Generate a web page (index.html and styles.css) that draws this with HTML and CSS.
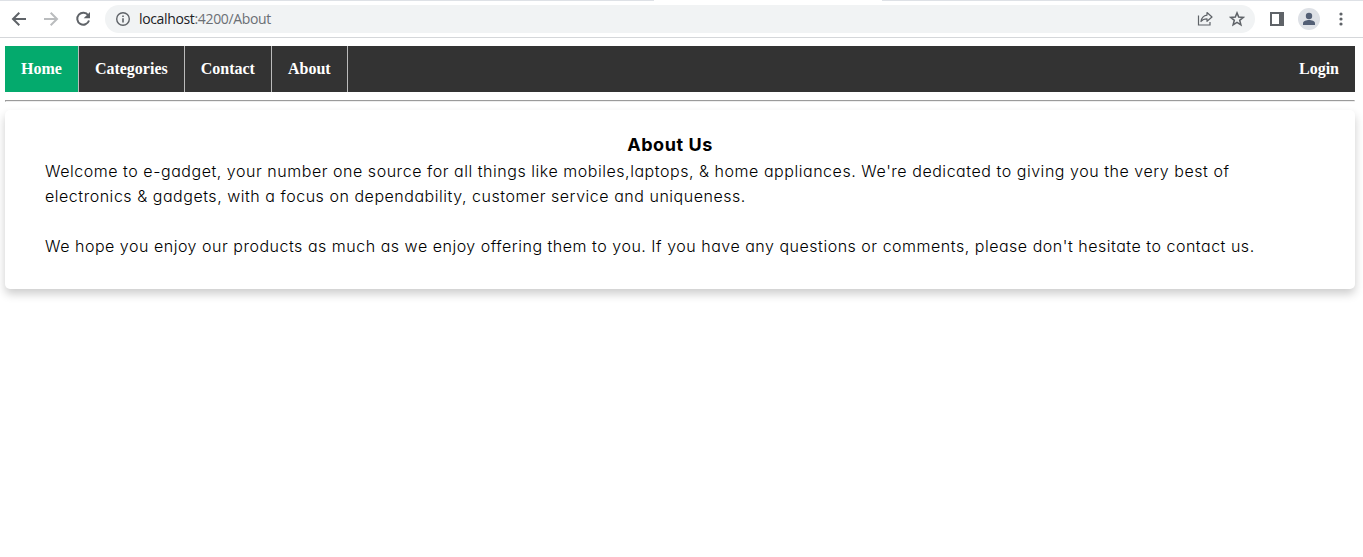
FILE: index.html
```html
<!DOCTYPE html>
<html lang="en">
<head>
<meta charset="utf-8">
<title>About</title>
<link rel="stylesheet" href="styles.css">
</head>
<body>
<header class="toolbar">
  <div class="tab-edge"><span class="edge edge-left"></span><span class="edge edge-right"></span></div>
  <div class="controls">
    <svg class="icon back" viewBox="0 0 16 16"><path d="M15 8H2M8.300 1.700 2 8l6.300 6.300" fill="none" stroke="#5f6368" stroke-width="2"/></svg>
    <svg class="icon forward" viewBox="0 0 16 16"><path d="M1 8h13M7.700 1.700 14 8l-6.300 6.300" fill="none" stroke="#babcbe" stroke-width="2"/></svg>
    <svg class="icon reload" viewBox="0 0 16 16"><path d="M13.200 4.300A6 6 0 1 0 14 9.500" fill="none" stroke="#5f6368" stroke-width="2"/><path d="M15 1v6.300H8.700z" fill="#5f6368"/></svg>
    <div class="address">
      <svg class="info" viewBox="0 0 14 14"><circle cx="7" cy="7" r="6.300" fill="none" stroke="#5f6368" stroke-width="1.400"/><path d="M6.200 6.200h1.600v4.300H6.200zM6.200 3.500h1.600v1.600H6.200z" fill="#5f6368"/></svg>
      <span class="url"><span class="host">localhost</span>:4200/About</span>
      <svg class="share" viewBox="0 0 16 16"><path d="M1.500 4.500v9.500h11.500v-3" fill="none" stroke="#5f6368" stroke-width="1.200"/><path d="M10 1.500 15 6l-5 4.300V7.800C7.300 7.800 5.300 8.600 4 10.500 4.500 7 6.500 4.600 10 4.100z" fill="none" stroke="#5f6368" stroke-width="1.200" stroke-linejoin="round"/></svg>
      <svg class="star" viewBox="0 0 16 16"><path d="m8 1.900 1.700 4.200 4.500.3-3.500 2.900 1.200 4.500L8 11.400l-3.900 2.400 1.200-4.500-3.500-2.900 4.500-.3z" fill="none" stroke="#5f6368" stroke-width="1.500"/></svg>
    </div>
    <svg class="panel" viewBox="0 0 14 14"><path d="M0 0h14v14H0zM2 2v10h7V2z" fill="#5f6368" fill-rule="evenodd"/></svg>
    <svg class="profile" viewBox="0 0 22 22"><circle cx="11" cy="11" r="11" fill="#dee1e6"/><circle cx="11" cy="8" r="3.200" fill="#535f75"/><path d="M5 17v-1.600c0-2.200 3.500-3.300 6-3.300s6 1.100 6 3.300V17z" fill="#535f75"/></svg>
    <svg class="more" viewBox="0 0 4 14"><g fill="#5f6368"><circle cx="2" cy="2" r="1.600"/><circle cx="2" cy="7" r="1.600"/><circle cx="2" cy="12" r="1.600"/></g></svg>
  </div>
</header>
<main class="page">
  <nav class="nav">
    <a class="link active">Home</a>
    <a class="link">Categories</a>
    <a class="link">Contact</a>
    <a class="link">About</a>
    <a class="link login">Login</a>
  </nav>
  <hr class="rule">
  <section class="card">
    <h1 class="title">About Us</h1>
    <p class="text"><span class="line first">Welcome to e-gadget, your number one source for all things like mobiles,laptops, &amp; home appliances. We're dedicated to giving you the very best of</span>
    <span class="line second">electronics &amp; gadgets, with a focus on dependability, customer service and uniqueness.</span></p>
    <p class="text"><span class="line third">We hope you enjoy our products as much as we enjoy offering them to you. If you have any questions or comments, please don't hesitate to contact us.</span></p>
  </section>
</main>
</body>
</html>
```
FILE: styles.css
```css
* { box-sizing: border-box; }
body { margin: 0; min-height: 100vh; background: #fff; color: #000; }
svg { display: block; flex: none; }
.toolbar { height: 38px; border-bottom: 1px solid #d5d7da; }
.tab-edge { display: flex; justify-content: space-between; height: 1px; }
.edge { background: #dee1e6; }
.edge-left { width: 654px; }
.edge-right { width: 481px; }
.controls { display: flex; align-items: center; height: 36px; padding: 0 20px 0 11px; }
.icon { width: 16px; height: 16px; margin-right: 16px; }
.reload { margin-right: 14px; }
.address { display: flex; align-items: center; flex: 1; height: 28px; padding: 0 10px 0 11px; border-radius: 14px; background: #f1f3f4; }
.info { width: 14px; height: 14px; }
.url { flex: 1; margin-left: 9px; font: 14px/20px "Open Sans", sans-serif; color: #6b6f74; letter-spacing: -0.35px; }
.host { color: #202124; }
.share { width: 16px; height: 16px; margin-right: 16px; }
.star { width: 16px; height: 16px; }
.panel { width: 14px; height: 14px; margin-left: 15px; }
.profile { width: 22px; height: 22px; margin-left: 14px; }
.more { width: 4px; height: 14px; margin-left: 19px; }
.page { padding: 8px 8px 24px 5px; }
.nav { display: flex; height: 46px; background: #333; }
.link { padding: 14px 16px; border-right: 1px solid #bbb; font: bold 16px/18px "Liberation Serif", serif; color: #fff; }
.active { background: #04aa6d; }
.login { margin-left: auto; border-right: 0; }
.rule { height: 2px; margin: 8px 0; border: 1px solid #eee; border-top-color: #9a9a9a; border-left-color: #9a9a9a; }
.card { height: 179px; padding: 21px 60px 0 40px; border-radius: 5px; background: #fff; box-shadow: 0 5px 10px rgba(0, 0, 0, 0.2); font-family: Inter, sans-serif; font-feature-settings: "cv11"; }
.title { margin: 0 0 1px; font-size: 18px; line-height: 27px; font-weight: 700; text-align: center; letter-spacing: 0.55px; }
.text { margin: 0 0 25px; font-size: 16px; line-height: 25px; font-weight: 300; }
.line { display: block; white-space: nowrap; }
.first { letter-spacing: 0.538px; }
.second { letter-spacing: 0.53px; }
.third { letter-spacing: 0.517px; }
```
